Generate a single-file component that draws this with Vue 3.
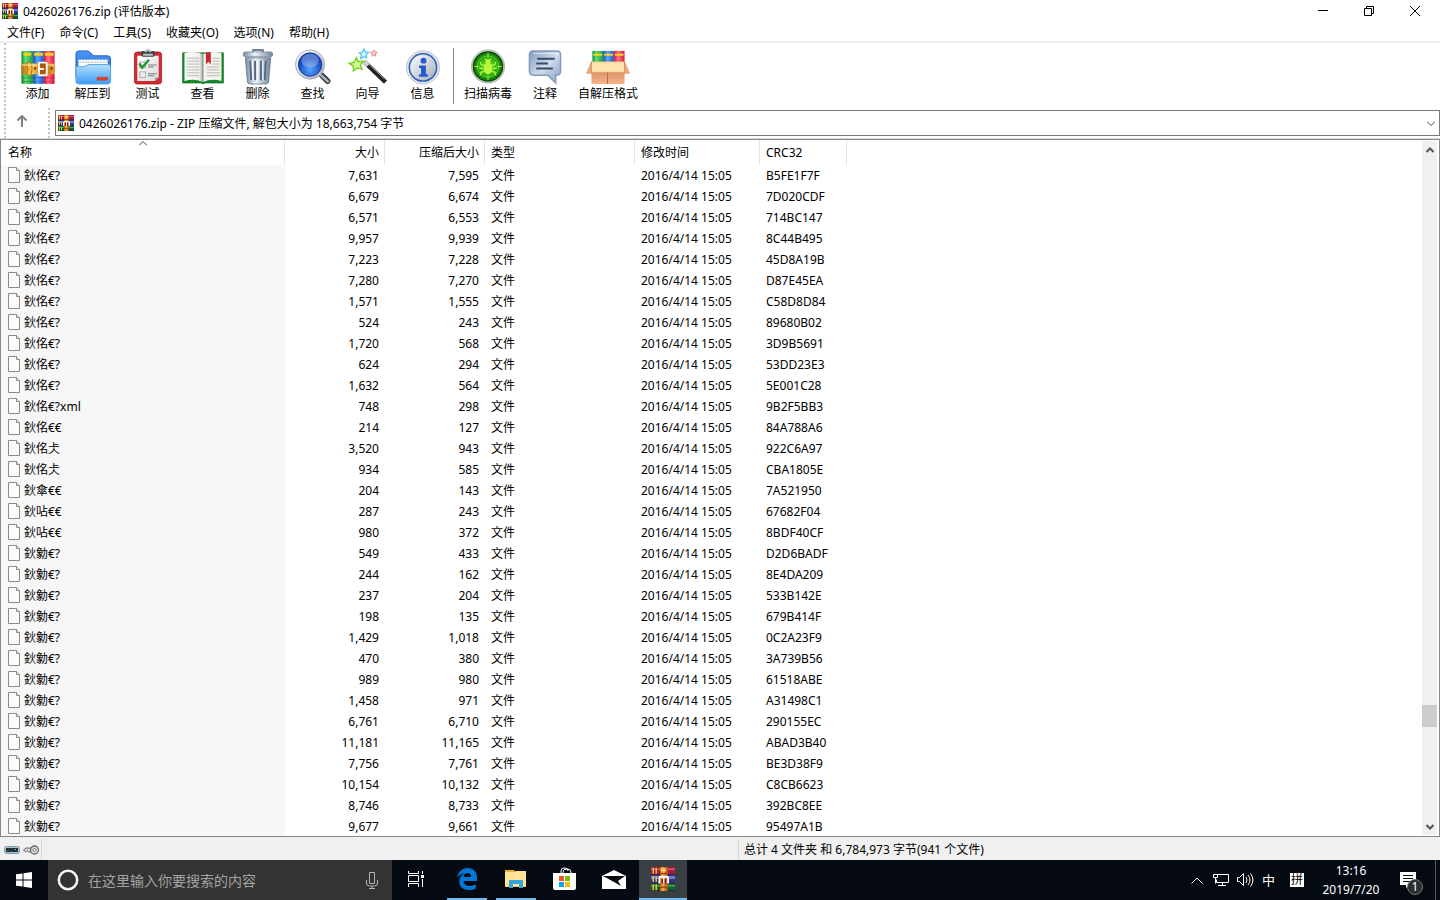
<template>
  <div class="desktop">
    <!-- 图标库 -->
    <svg class="sprite" aria-hidden="true">
      <defs>
        <linearGradient id="gGreen"><stop offset="0" stop-color="#0c8a30" /><stop offset=".35" stop-color="#62dd76" /><stop offset="1" stop-color="#1b9c3e" /></linearGradient>
        <linearGradient id="gBlue"><stop offset="0" stop-color="#1648b8" /><stop offset=".4" stop-color="#5ea8ff" /><stop offset="1" stop-color="#1b55c8" /></linearGradient>
        <linearGradient id="gRed"><stop offset="0" stop-color="#d3123b" /><stop offset=".4" stop-color="#ff7187" /><stop offset="1" stop-color="#d8163c" /></linearGradient>
        <linearGradient id="gBelt"><stop offset="0" stop-color="#b56c0c" /><stop offset=".3" stop-color="#ffd35a" /><stop offset=".65" stop-color="#b96a10" /><stop offset="1" stop-color="#e8a02a" /></linearGradient>
        <linearGradient id="gFolder" x2="0" y2="1"><stop offset="0" stop-color="#b4dffd" /><stop offset="1" stop-color="#3f9bf3" /></linearGradient>
        <linearGradient id="gFolderBack" x2="0" y2="1"><stop offset="0" stop-color="#4c95f4" /><stop offset="1" stop-color="#2469d4" /></linearGradient>
        <linearGradient id="gPaper" x2="1" y2="1"><stop offset="0" stop-color="#ffffff" /><stop offset="1" stop-color="#d9dcdc" /></linearGradient>
        <linearGradient id="gPage"><stop offset="0" stop-color="#ffffff" /><stop offset=".8" stop-color="#efeee9" /><stop offset="1" stop-color="#a9a8a2" /></linearGradient>
        <linearGradient id="gSteel"><stop offset="0" stop-color="#7689a3" /><stop offset=".4" stop-color="#eff5fb" /><stop offset="1" stop-color="#71839d" /></linearGradient>
        <linearGradient id="gSilver" x2="1" y2="1"><stop offset="0" stop-color="#ffffff" /><stop offset="1" stop-color="#a5adb8" /></linearGradient>
        <radialGradient id="gLens" cy=".72"><stop offset="0" stop-color="#55a5ff" /><stop offset="1" stop-color="#174abe" /></radialGradient>
        <radialGradient id="gRadar"><stop offset="0" stop-color="#8be02a" /><stop offset=".55" stop-color="#34b712" /><stop offset="1" stop-color="#0c7208" /></radialGradient>
        <linearGradient id="gBubble" x2="1" y2="1"><stop offset="0" stop-color="#7f9bc4" /><stop offset=".5" stop-color="#cfdcec" /><stop offset="1" stop-color="#829ec6" /></linearGradient>
        <linearGradient id="gBox" x2="0" y2="1"><stop offset="0" stop-color="#c77b4d" /><stop offset="1" stop-color="#f5b58b" /></linearGradient>
      </defs>

      <symbol id="i-rar" viewBox="0 0 16 16">
        <path fill="#a51d3c" d="M0 0h16v5H0z" /><path fill="#e2577a" d="M0 1h16v1H0z" />
        <path fill="#33348f" d="M0 5h16v6H0z" /><path fill="#7277d0" d="M0 6h16v2H0z" />
        <path fill="#0f6429" d="M0 11h16v5H0z" /><path fill="#3fae58" d="M0 12h16v1H0z" />
        <path fill="#27223a" d="M0 4.600h16v.6H0zM0 10.300h16v.7H0zM0 15.300h16v.7H0z" />
        <path fill="#e8bd35" d="M1 .5h1v4H1zM3 .5h1v4H3zM1 6h1v4H1zM3 6h1v4H3zM1 11.500h1v4H1zM3 11.500h1v4H3z" />
        <path fill="#c9661c" d="M6 0h5v16H6z" /><path fill="#f1a63a" d="M7 0h2v16H7z" />
        <path fill="#f6d06a" d="M6.500 1h3.500v2H6.500z" /><path fill="#a34c18" d="M6 4h5v1H6zM6 13h5v1H6z" />
        <path fill="none" stroke="#fff" stroke-width="1.200" d="M5.600 11V7.500q0-1 1-1h3.800q1 0 1 1V11" />
        <path fill="#7d1f1d" d="M7 8h3v3H7z" /><path fill="#f3efe6" d="M8 7h1v4H8z" />
      </symbol>

      <symbol id="i-add" viewBox="0 0 44 38">
        <rect x="5" y="3" width="12" height="34" rx="1" fill="url(#gGreen)" />
        <rect x="17" y="3" width="11" height="34" rx="1" fill="url(#gBlue)" />
        <rect x="28" y="3" width="11" height="34" rx="1" fill="url(#gRed)" />
        <path fill="#ffcf23" d="M7 5h8v3H7zM18 5h9v3h-9zM29 5h9v3h-9z" />
        <path fill="#05602a" opacity=".4" d="M5 30h12v1H5zM5 34h12v1H5z" /><path fill="#123a9a" opacity=".4" d="M17 30h11v1H17zM17 34h11v1H17z" /><path fill="#a90b2c" opacity=".4" d="M28 30h11v1H28zM28 34h11v1H28z" />
        <rect x="5" y="16" width="34" height="11" rx="1" fill="url(#gBelt)" />
        <path fill="#f4b63c" stroke="#8e4b08" stroke-width=".7" d="M10 16l3-2q3 2 3 7.500T13 29l-3-2q3-5 0-11z" />
        <path stroke="#fff0ae" d="M5 17.500h34" />
        <rect x="23" y="15" width="8" height="13" rx="1" fill="#a95a0e" stroke="#f6f6f0" stroke-width="2" />
        <path stroke="#fff" stroke-width="2" d="M23 21.500h5" /><path fill="#5b2c08" d="M35 20h2v2h-2zM18 20h2v2h-2z" />
      </symbol>

      <symbol id="i-extract" viewBox="0 0 44 38">
        <path fill="url(#gFolderBack)" stroke="#1f63c9" d="M4.500 30V6q0-3 3-3H16q2 0 3.500 2l3 3H37q3 0 3 3v20z" />
        <path fill="#fff" d="M7 12h30v14H7z" />
        <path stroke="#a5acb7" stroke-width="1" stroke-dasharray="2 1" d="M8 14.500h28" />
        <path fill="url(#gFolder)" stroke="#55a2ec" d="M4.500 19q6 1 10-.5 2-1.500 4-1.500H38q2 0 2 2v15q0 3-3 3H7.500q-3 0-3-3z" />
        <rect x="26" y="30" width="11" height="3" rx="1" fill="#eb3c1c" stroke="#a84139" stroke-width=".5" />
      </symbol>

      <symbol id="i-test" viewBox="0 0 44 38">
        <rect x="8" y="4" width="28" height="33" rx="3" fill="#d5282e" stroke="#8f171c" stroke-width=".7" />
        <path fill="url(#gPaper)" d="M11 8h22v22l-4 4H11z" /><path fill="#a7a7a7" d="M33 30l-4 4v-4z" />
        <rect x="15" y="3" width="14" height="6" rx="2" fill="#3d4246" /><path stroke="#bfc4c8" stroke-width="2" fill="none" d="M17 7h10M19 4q3-4 6 0" />
        <path fill="none" stroke="#aaa" d="M13.500 14.500h6v6h-6zM13.500 24.500h6v6h-6z" />
        <path stroke="#777" d="M22 17.500h9M22 19.500h6M22 26.500h9M22 28.500h6" />
        <path fill="none" stroke="#29952f" stroke-width="2.500" d="M13 16l3 4 7-8" />
      </symbol>

      <symbol id="i-view" viewBox="0 0 44 38">
        <path fill="#158a2b" stroke="#08651a" stroke-width=".6" d="M1 5h42v31H24l-2 1-2-1H1z" />
        <path fill="url(#gPage)" d="M3 5.500q10-3 19 1V35q-9-4-19-1z" /><path fill="#f3f2ed" d="M22 6.500q9-4 19-1V34q-10-3-19 1z" />
        <path stroke="#777" stroke-width=".8" fill="none" d="M22 7v28" />
        <path stroke="#b7b7b2" fill="none" d="M5 10.500h13M5 13.500h13M5 16.500h13M5 19.500h13M5 22.500h13M5 25.500h13M5 28.500h13M26 19.500h13M26 22.500h13M26 25.500h13M26 28.500h13M32 10.500h7M32 13.500h7M32 16.500h7" />
        <path fill="#c9252b" d="M25 4.500l5-.5v13l-2.500-3L25 17z" />
      </symbol>

      <symbol id="i-delete" viewBox="0 0 44 38">
        <path fill="none" stroke="#70839a" stroke-width="2" d="M17 5V2h10v3" />
        <rect x="7" y="4" width="30" height="5" rx="2" fill="url(#gSteel)" stroke="#63768f" stroke-width=".7" />
        <path fill="url(#gSteel)" stroke="#63768f" stroke-width=".8" d="M9 10h26l-2 24q0 3-3 3H14q-3 0-3-3z" />
        <path stroke="#58697f" stroke-width="2" d="M14 13l1 20M19 13v20M25 13v20M30 13l-1 20" />
        <path stroke="#f8fcff" d="M16 13l1 20M21.500 13v20M27 13v20" />
      </symbol>

      <symbol id="i-find" viewBox="0 0 44 38">
        <path stroke="#454b54" stroke-width="6" stroke-linecap="round" d="M31 28l6 6" /><path stroke="#bac0c8" stroke-width="2" d="M29 27l9 8" />
        <circle cx="19" cy="17" r="15" fill="url(#gSilver)" stroke="#9aa3b0" stroke-width=".8" />
        <circle cx="19" cy="17" r="12" fill="url(#gLens)" stroke="#183e9c" />
        <ellipse cx="19" cy="13" rx="9" ry="7" fill="#fff" opacity=".28" />
      </symbol>

      <symbol id="i-wizard" viewBox="0 0 44 38">
        <path stroke="#222" stroke-width="4.500" d="M18 14l22 21" /><path stroke="#999" stroke-width="1" d="M20 14l19 18" /><path stroke="#ccc" stroke-width="4.500" d="M18 14l4 4" />
        <path fill="#d8ff93" stroke="#76d125" stroke-width="1.500" d="M10 10l2 4 5-.5-3 4 2 4-5-1-4 3v-5l-4-2.500 5-1.500z" />
        <path fill="#d8f8ff" stroke="#4dcbee" stroke-width="1.300" d="M18 1l1 3 3.500.5L20 7l.5 3-3-1-3 2 .5-4-2-2 3-.5z" />
        <path fill="#ffd5d5" stroke="#f08080" d="M28 2l1 2 2.500.5L29.500 6l.5 2.500L28 7l-2 1.500.5-2.500-2-1.500L27 4z" />
      </symbol>

      <symbol id="i-info" viewBox="0 0 44 38">
        <circle cx="22" cy="20" r="17" fill="#e0e3e8" stroke="#c0c5cd" /><circle cx="22" cy="20" r="14" fill="url(#gSilver)" stroke="#2a5cb8" stroke-width="1.500" />
        <circle cx="22.500" cy="13" r="3" fill="#2459cf" /><path fill="#2459cf" d="M18 18h7v9h2v2.500h-9V27h2v-6.500h-2z" />
      </symbol>

      <symbol id="i-virus" viewBox="0 0 44 38">
        <circle cx="22" cy="19" r="17" fill="#d9dcd9" stroke="#9a9e9a" stroke-width=".8" /><circle cx="22" cy="19" r="15" fill="url(#gRadar)" stroke="#0b4a09" stroke-width="1.500" />
        <circle cx="22" cy="19" r="11" fill="none" stroke="#7adc41" stroke-width=".7" /><path stroke="#a7f553" d="M22 5v5M22 28v5M8 19h5M31 19h5" />
        <ellipse cx="22" cy="21" rx="4.500" ry="6" fill="#b9f83c" /><circle cx="22" cy="14" r="2.500" fill="#b9f83c" />
        <path fill="none" stroke="#b9f83c" stroke-width="1.300" d="M19 11l2 2M25 11l-2 2M18 18l-3-1-1-3M26 18l3-1 1-3M17 21h-4M27 21h4M18 24l-3 1-1 3M26 24l3 1 1 3" />
      </symbol>

      <symbol id="i-comment" viewBox="0 0 44 38">
        <path fill="url(#gBubble)" stroke="#8699b8" stroke-width="1.500" d="M10 3h24q4 0 4 4v17q0 4-4 4h-1v8l-8-8H10q-4 0-4-4V7q0-4 4-4z" />
        <path fill="none" stroke="#fff" opacity=".7" d="M10 5.500h23q2.500 0 2.500 2.500" />
        <path stroke="#3c4b65" stroke-width="2" d="M14 11h18M13 16h12M13 21h17" />
      </symbol>

      <symbol id="i-sfx" viewBox="0 0 44 38">
        <path fill="url(#gGreen)" d="M6 3h11v15H6z" /><path fill="url(#gBlue)" d="M17 3h11v15H17z" /><path fill="url(#gRed)" d="M28 3h11v15H28z" />
        <path fill="#ffcf23" d="M7 6h9v2H7zM18 6h9v2h-9zM29 6h9v2h-9z" />
        <path fill="url(#gBox)" d="M5 15h34v22H5z" /><path stroke="#b66e43" d="M21.500 24v13" />
        <path fill="#ffe2ad" stroke="#dba35e" stroke-width=".6" d="M5 14h34v11H5z" />
        <path fill="#f0ac7a" stroke="#cd8657" stroke-width=".6" d="M5 14v12H0zM39 14v12h5z" />
      </symbol>

      <symbol id="i-file" viewBox="0 0 12 16">
        <path fill="#fafbfb" stroke="#8b8b8b" d="M.5.5h8l3 3v12H.5z" /><path fill="#e9e9e9" stroke="#8b8b8b" d="M8.500.5v3h3" />
      </symbol>
    </svg>

    <main class="window">
      <header class="titlebar">
        <svg class="icon16"><use href="#i-rar" /></svg>
        <h1 class="title">0426026176.zip (评估版本)</h1>
        <div class="window-buttons">
          <button aria-label="最小化"><svg viewBox="0 0 10 10"><path d="M0 4.500h10" /></svg></button>
          <button aria-label="还原"><svg viewBox="0 0 10 10"><path d="M.5 2.500h7v7h-7zM2.500 2.500v-2h7v7h-2" /></svg></button>
          <button aria-label="关闭"><svg viewBox="0 0 10 10"><path d="M0 0l10 10M10 0L0 10" /></svg></button>
        </div>
      </header>

      <nav class="menubar">
        <button v-for="item in menus" :key="item">{{ item }}</button>
      </nav>

      <div class="toolbar">
        <template v-for="tool in tools" :key="tool.icon">
          <span v-if="tool.icon === 'virus'" class="separator"></span>
          <button class="tool" :class="'tool-' + tool.icon">
            <svg><use :href="'#i-' + tool.icon" /></svg>
            <span>{{ tool.label }}</span>
          </button>
        </template>
      </div>

      <div class="address">
        <div class="up-wrap">
          <button class="up" aria-label="向上"><svg viewBox="0 0 12 12"><path d="M6 12V1M1.500 5.500L6 1l4.500 4.500" /></svg></button>
        </div>
        <div class="path-wrap">
          <div class="path-box">
            <svg class="icon16"><use href="#i-rar" /></svg>
            <select v-model="path" aria-label="路径">
              <option>{{ archive }}</option>
            </select>
            <svg class="chevron" viewBox="0 0 8 5"><path d="M0 .5l4 4 4-4" /></svg>
          </div>
        </div>
      </div>

      <section class="list">
        <div class="list-body">
          <table>
            <colgroup>
              <col class="c-name"><col class="c-size"><col class="c-size"><col class="c-type"><col class="c-time"><col class="c-crc">
            </colgroup>
            <thead>
              <tr>
                <th>名称<svg class="sort" viewBox="0 0 8 5"><path d="M0 4.500l4-4 4 4" /></svg></th>
                <th class="num">大小</th>
                <th class="num">压缩后大小</th>
                <th>类型</th>
                <th>修改时间</th>
                <th>CRC32</th>
              </tr>
            </thead>
            <tbody>
              <tr v-for="file in files" :key="file.crc">
                <td class="name"><div><svg><use href="#i-file" /></svg>{{ file.name }}</div></td>
                <td class="num">{{ file.size }}</td>
                <td class="num">{{ file.packed }}</td>
                <td>文件</td>
                <td>2016/4/14 15:05</td>
                <td>{{ file.crc }}</td>
              </tr>
            </tbody>
          </table>
        </div>
        <div class="scrollbar">
          <button aria-label="向上滚动"><svg viewBox="0 0 8 6"><path d="M.5 5L4 1.500 7.500 5" /></svg></button>
          <span class="track-before"></span>
          <span class="thumb"></span>
          <span class="track-after"></span>
          <button aria-label="向下滚动"><svg viewBox="0 0 8 6"><path d="M.5 1L4 4.500 7.500 1" /></svg></button>
        </div>
      </section>

      <footer class="status">
        <div class="status-icons">
          <svg class="disk" viewBox="0 0 16 8"><rect x=".5" y=".5" width="15" height="7" rx="2" fill="#a9c3cf" stroke="#7e99a6" /><path fill="#28343b" d="M2 2h12v4H2z" /><path fill="#8fa" d="M11 3h1v1h-1z" /></svg>
          <svg class="key" viewBox="0 0 17 10"><path fill="#d4d4d4" stroke="#686868" d="M8 3H3L.5 5 3 7l1.500-1L6 7h3" /><circle cx="11.500" cy="5" r="4" fill="#ddd" stroke="#686868" stroke-width="1.300" /><circle cx="11.500" cy="5" r="1.500" fill="#fff" stroke="#555" stroke-width=".8" /></svg>
        </div>
        <div class="status-selected"></div>
        <div class="status-total">总计 4 文件夹 和 6,784,973 字节(941 个文件)</div>
      </footer>
    </main>

    <div class="taskbar">
      <button class="start" aria-label="开始">
        <svg viewBox="0 0 16 16"><path fill="#fff" d="M0 2.300L6.500 1.400v6.100H0zM7.500 1.200L16 0v7.500H7.500zM0 8.500h6.500v6.100L0 13.700zM7.500 8.500H16V16l-8.500-1.200z" /></svg>
      </button>
      <label class="search">
        <svg class="cortana" viewBox="0 0 22 22"><circle cx="11" cy="11" r="9.200" fill="none" stroke="#f2f2f2" stroke-width="2.500" /></svg>
        <input v-model="query" type="text" placeholder="在这里输入你要搜索的内容" aria-label="搜索">
        <svg class="mic" viewBox="0 0 12 17"><path fill="none" stroke="#b5b5b5" d="M3.500.5h5v11h-5zM.5 8v3q0 3 3 3h5q3 0 3-3V8M6 14v2.500M3 16.500h6" /></svg>
      </label>
      <button class="task taskview" aria-label="任务视图">
        <svg viewBox="0 0 17 16"><path fill="none" stroke="#fff" d="M.5 0v2.500h10V0M.5 4.500h10v6H.5zM.5 16v-3.500h10V16M14.500 0v3M14.500 8v8" /><path fill="#fff" d="M13 4h3v3h-3z" /></svg>
      </button>
      <button class="task open" aria-label="Edge">
        <svg class="t-edge" viewBox="0 0 20 22"><path fill="#0078d7" d="M0 10C1 4 5 0 10.500 0 16.500 0 20 4 20 9.500V13H6.500c0 3.500 3 5 6 5 2.500 0 4.500-.6 6.300-1.700v4.200C17 21.500 14.500 22 12 22 6 22 2.300 18.500 2.300 13.500c0-3.500 2-6.500 5.200-8C4 6 1.500 7.500 0 10zM6.700 9H14c0-2.500-1.200-4-3.500-4-2 0-3.500 1.600-3.800 4z" /></svg>
      </button>
      <button class="task open" aria-label="文件资源管理器">
        <svg class="t-folder" viewBox="0 0 22 18"><path fill="#e9b22e" d="M0 0h9l2 2H0z" /><path fill="#ffe292" d="M0 2h10l1-1h10v16H0z" /><path fill="#f7ce60" d="M0 16h21v1H0z" /><path fill="#35a5dc" d="M4 10h14v8h-4v-4H8v4H4z" /></svg>
      </button>
      <button class="task" aria-label="应用商店">
        <svg class="t-store" viewBox="0 0 24 24"><path fill="none" stroke="#fff" d="M8 7V4q0-3 3-3h1q3 0 3 3M10 7V5q0-3 4-3 4 0 4 3v2" /><path fill="#fff" d="M0 6h23v15q0 2-2 2H2q-2 0-2-2z" /><path fill="#f25022" d="M6 9h5v5H6z" /><path fill="#7fba00" d="M12 9h5v5h-5z" /><path fill="#00a4ef" d="M6 15h5v5H6z" /><path fill="#ffb900" d="M12 15h5v5h-5z" /></svg>
      </button>
      <button class="task" aria-label="邮件">
        <svg class="t-mail" viewBox="0 0 24 19"><path fill="#fff" d="M0 6l12-6 12 6v13H0z" /><path fill="#080b12" d="M1 6h22l-7 5 3 5-7-4z" /></svg>
      </button>
      <button class="task open active" aria-label="WinRAR">
        <svg class="t-rar"><use href="#i-rar" /></svg>
      </button>

      <div class="tray">
        <svg class="t-up" viewBox="0 0 12 7"><path d="M.5 6.500L6 1l5.500 5.500" /></svg>
        <svg class="t-net" viewBox="0 0 16 14"><path d="M4.500 1.500h11v8H3.500v-3M9.500 9.500v3M5 12.500h8M.5 1.500h4v3h-4zM2.500 4.500v6" /></svg>
        <svg class="t-vol" viewBox="0 0 17 14"><path d="M.5 4.500h2l4-4v12l-4-4h-2zM9 4q2 3 0 6M11 2q4 5 0 10M13.500.5q5 6.500 0 13" /></svg>
        <span class="lang">中</span>
        <span class="ime">拼</span>
        <div class="clock"><time>13:16</time><time>2019/7/20</time></div>
        <button class="notice" aria-label="通知">
          <svg viewBox="0 0 16 16"><path fill="#fff" d="M0 0h16v13H9l-3 3v-3H0z" /><path stroke="#080b12" d="M3 3.500h10M3 6.500h10M3 9.500h7" /></svg>
          <span class="badge">1</span>
        </button>
      </div>
    </div>
  </div>
</template>

<script setup>
import { ref } from 'vue'

const archive = '0426026176.zip - ZIP 压缩文件, 解包大小为 18,663,754 字节'
const path = ref(archive)
const query = ref('')

const menus = ['文件(F)', '命令(C)', '工具(S)', '收藏夹(O)', '选项(N)', '帮助(H)']

const tools = [
  { icon: 'add', label: '添加' },
  { icon: 'extract', label: '解压到' },
  { icon: 'test', label: '测试' },
  { icon: 'view', label: '查看' },
  { icon: 'delete', label: '删除' },
  { icon: 'find', label: '查找' },
  { icon: 'wizard', label: '向导' },
  { icon: 'info', label: '信息' },
  { icon: 'virus', label: '扫描病毒' },
  { icon: 'comment', label: '注释' },
  { icon: 'sfx', label: '自解压格式' }
]

// 名称, 大小, 压缩后大小, CRC32
const files = [
  ['鈥佲€?', '7,631', '7,595', 'B5FE1F7F'],
  ['鈥佲€?', '6,679', '6,674', '7D020CDF'],
  ['鈥佲€?', '6,571', '6,553', '714BC147'],
  ['鈥佲€?', '9,957', '9,939', '8C44B495'],
  ['鈥佲€?', '7,223', '7,228', '45D8A19B'],
  ['鈥佲€?', '7,280', '7,270', 'D87E45EA'],
  ['鈥佲€?', '1,571', '1,555', 'C58D8D84'],
  ['鈥佲€?', '524', '243', '89680B02'],
  ['鈥佲€?', '1,720', '568', '3D9B5691'],
  ['鈥佲€?', '624', '294', '53DD23E3'],
  ['鈥佲€?', '1,632', '564', '5E001C28'],
  ['鈥佲€?xml', '748', '298', '9B2F5BB3'],
  ['鈥佲€€', '214', '127', '84A788A6'],
  ['鈥佲仧', '3,520', '943', '922C6A97'],
  ['鈥佲仧', '934', '585', 'CBA1805E'],
  ['鈥傘€€', '204', '143', '7A521950'],
  ['鈥呫€€', '287', '243', '67682F04'],
  ['鈥呫€€', '980', '372', '8BDF40CF'],
  ['鈥勨€?', '549', '433', 'D2D6BADF'],
  ['鈥勨€?', '244', '162', '8E4DA209'],
  ['鈥勨€?', '237', '204', '533B142E'],
  ['鈥勨€?', '198', '135', '679B414F'],
  ['鈥勨€?', '1,429', '1,018', '0C2A23F9'],
  ['鈥勨€?', '470', '380', '3A739B56'],
  ['鈥勨€?', '989', '980', '61518ABE'],
  ['鈥勨€?', '1,458', '971', 'A31498C1'],
  ['鈥勨€?', '6,761', '6,710', '290155EC'],
  ['鈥勨€?', '11,181', '11,165', 'ABAD3B40'],
  ['鈥勨€?', '7,756', '7,761', 'BE3D38F9'],
  ['鈥勨€?', '10,154', '10,132', 'C8CB6623'],
  ['鈥勨€?', '8,746', '8,733', '392BC8EE'],
  ['鈥勨€?', '9,677', '9,661', '95497A1B']
].map(([name, size, packed, crc]) => ({ name, size, packed, crc }))
</script>

<style>
body {
  margin: 0;
}
</style>

<style scoped>
.desktop {
  display: flex;
  flex-direction: column;
  height: 100vh;
  overflow: hidden;
  background: #fff;
  color: #000;
  font-family: "Noto Sans", "Noto Sans CJK SC", sans-serif;
  font-size: 12px;
  line-height: 18px;
}

.desktop * {
  box-sizing: border-box;
}

.sprite {
  position: absolute;
  width: 0;
  height: 0;
}

button,
input,
select {
  margin: 0;
  padding: 0;
  border: 0;
  background: none;
  color: inherit;
  font: inherit;
}

svg {
  flex: none;
}

.icon16 {
  width: 16px;
  height: 16px;
}

.window {
  flex: 1;
  min-height: 0;
  display: flex;
  flex-direction: column;
}

/* 标题栏 */
.titlebar {
  display: flex;
  align-items: center;
  height: 22px;
  padding-left: 2px;
}

.title {
  flex: 1;
  margin: 0 0 0 5px;
  padding-top: 2px;
  font-size: 12px;
  font-weight: 400;
}

.window-buttons {
  display: flex;
  padding-right: 2px;
}

.window-buttons button {
  display: flex;
  align-items: center;
  justify-content: center;
  width: 46px;
  height: 20px;
}

.window-buttons svg {
  width: 10px;
  height: 10px;
  fill: none;
  stroke: #000;
}

/* 菜单 */
.menubar {
  display: flex;
  gap: 15px;
  height: 21px;
  padding: 2px 7px 0;
  border-bottom: 2px solid #f0f0f0;
}

.menubar button {
  height: 18px;
}

/* 工具栏 */
.toolbar {
  display: flex;
  height: 63px;
  margin-left: 4px;
  padding: 5px 0 0 4px;
  border-left: 2px dotted #c4c4c4;
}

.tool {
  display: flex;
  flex-direction: column;
  align-items: center;
  width: 55px;
  white-space: nowrap;
}

.tool svg {
  width: 44px;
  height: 37px;
}

.tool-virus {
  width: 58px;
}

.tool-comment {
  width: 56px;
}

.tool-sfx {
  width: 70px;
}

.separator {
  width: 1px;
  height: 56px;
  margin: 0 5px 0 3px;
  background: #8c8c8c;
}

/* 地址栏 */
.address {
  display: flex;
  height: 31px;
  margin-top: 2px;
  padding-left: 4px;
  border-bottom: 1px solid #d9d9d9;
}

.up-wrap {
  width: 44px;
  padding: 7px 0 0 10px;
  border-left: 2px dotted #c4c4c4;
}

.up {
  display: block;
}

.up svg {
  display: block;
  width: 12px;
  height: 12px;
  fill: none;
  stroke: #808080;
  stroke-width: 2;
}

.path-wrap {
  flex: 1;
  padding: 2px 0 2px 5px;
  border-left: 2px dotted #c4c4c4;
}

.path-box {
  position: relative;
  display: flex;
  align-items: center;
  height: 26px;
  padding-left: 2px;
  border: 1px solid #7a7a7a;
}

.path-box select {
  flex: 1;
  height: 24px;
  padding: 2px 0 0 5px;
  appearance: none;
  outline: none;
}

.chevron {
  position: absolute;
  right: 4px;
  width: 8px;
  height: 5px;
  fill: none;
  stroke: #444;
  pointer-events: none;
}

/* 文件列表 */
.list {
  flex: 1;
  min-height: 0;
  display: flex;
  padding-right: 2px;
  border: 1px solid #828790;
}

.list-body {
  flex: 1;
  overflow: hidden;
}

table {
  width: 846px;
  table-layout: fixed;
  border-collapse: separate;
  border-spacing: 0;
}

.c-name {
  width: 284px;
}

.c-size {
  width: 100px;
}

.c-type {
  width: 150px;
}

.c-time {
  width: 125px;
}

.c-crc {
  width: 87px;
}

th {
  position: relative;
  height: 25px;
  padding: 0 5px 0 6px;
  border-right: 1px solid #e5e5e5;
  font-weight: 400;
  text-align: left;
}

td {
  height: 21px;
  padding: 0 6px;
  line-height: 20px;
  white-space: nowrap;
}

th:first-child,
td.name {
  padding-left: 7px;
}

.num {
  text-align: right;
}

.name {
  background: #f7f7f7;
}

.name div {
  display: flex;
  align-items: center;
  gap: 4px;
  height: 21px;
}

.name svg {
  width: 12px;
  height: 16px;
  margin-bottom: 1px;
}

.sort {
  position: absolute;
  top: 1px;
  right: calc(50% - 4px);
  width: 8px;
  height: 5px;
  fill: none;
  stroke: #444;
}

.scrollbar {
  display: flex;
  flex-direction: column;
  width: 15px;
  margin: 1px 0;
  background: #f0f0f0;
}

.scrollbar button {
  display: flex;
  align-items: center;
  justify-content: center;
  height: 17px;
}

.scrollbar svg {
  width: 8px;
  height: 6px;
  fill: none;
  stroke: #555;
  stroke-width: 2;
}

.track-before {
  flex: 547;
}

.thumb {
  height: 22px;
  background: #cdcdcd;
}

.track-after {
  flex: 91;
}

/* 状态栏 */
.status {
  display: flex;
  height: 23px;
  padding-top: 2px;
  background: #f0f0f0;
}

.status-icons {
  display: flex;
  align-items: center;
  gap: 3px;
  width: 42px;
  padding-left: 4px;
  border-right: 1px solid #d7d7d7;
}

.disk {
  width: 16px;
  height: 8px;
}

.key {
  width: 17px;
  height: 10px;
}

.status-selected {
  flex: 699;
  border-right: 1px solid #d7d7d7;
}

.status-total {
  flex: 699;
  padding-left: 5px;
  line-height: 22px;
}

/* 任务栏 */
.taskbar {
  display: flex;
  height: 40px;
  background: #060a12;
  color: #fff;
}

.start {
  display: flex;
  align-items: center;
  justify-content: center;
  width: 48px;
}

.start svg {
  width: 16px;
  height: 16px;
}

.search {
  display: flex;
  align-items: center;
  width: 344px;
  padding: 0 14px 0 9px;
  background: #333;
}

.cortana {
  width: 22px;
  height: 22px;
}

.search input {
  flex: 1;
  min-width: 0;
  height: 40px;
  padding-left: 9px;
  font-size: 14px;
  outline: none;
}

.search input::placeholder {
  color: #a3a3a3;
  opacity: 1;
}

.mic {
  width: 12px;
  height: 17px;
}

.task {
  display: flex;
  align-items: center;
  justify-content: center;
  width: 40px;
  height: 40px;
  margin-right: 9px;
  border-bottom: 2px solid transparent;
}

.taskview {
  width: 48px;
  margin-right: 7px;
}

.open {
  border-bottom-color: #76b9ed;
}

.active {
  width: 48px;
  margin: 0 0 0 -4px;
  background: #3a3f44;
}

.taskview svg {
  width: 17px;
  height: 16px;
}

.t-edge {
  width: 20px;
  height: 22px;
}

.t-folder {
  width: 22px;
  height: 18px;
}

.t-store {
  width: 24px;
  height: 24px;
}

.t-mail {
  width: 24px;
  height: 19px;
}

.t-rar {
  width: 24px;
  height: 24px;
}

.tray {
  display: flex;
  align-items: center;
  margin: 0 4px 0 auto;
  padding-right: 16px;
  border-right: 1px solid #555a60;
}

.tray > svg {
  fill: none;
  stroke: #fff;
}

.t-up {
  width: 12px;
  height: 7px;
  margin-right: 10px;
}

.t-net {
  width: 16px;
  height: 14px;
  margin-right: 8px;
}

.t-vol {
  width: 17px;
  height: 14px;
  margin-right: 8px;
}

.lang {
  margin-right: 15px;
  font-size: 13px;
}

.ime {
  width: 14px;
  margin-right: 17px;
  background: #fff;
  color: #000;
  line-height: 14px;
  text-align: center;
}

.clock {
  display: flex;
  flex-direction: column;
  width: 60px;
  line-height: 19px;
  text-align: center;
}

.notice {
  position: relative;
  display: flex;
  width: 38px;
  padding-left: 19px;
}

.notice svg {
  width: 16px;
  height: 16px;
}

.badge {
  position: absolute;
  top: 7px;
  left: 26px;
  width: 16px;
  height: 16px;
  border: 1px solid #777;
  border-radius: 8px;
  background: #2b2e33;
  line-height: 14px;
  text-align: center;
}
</style>
